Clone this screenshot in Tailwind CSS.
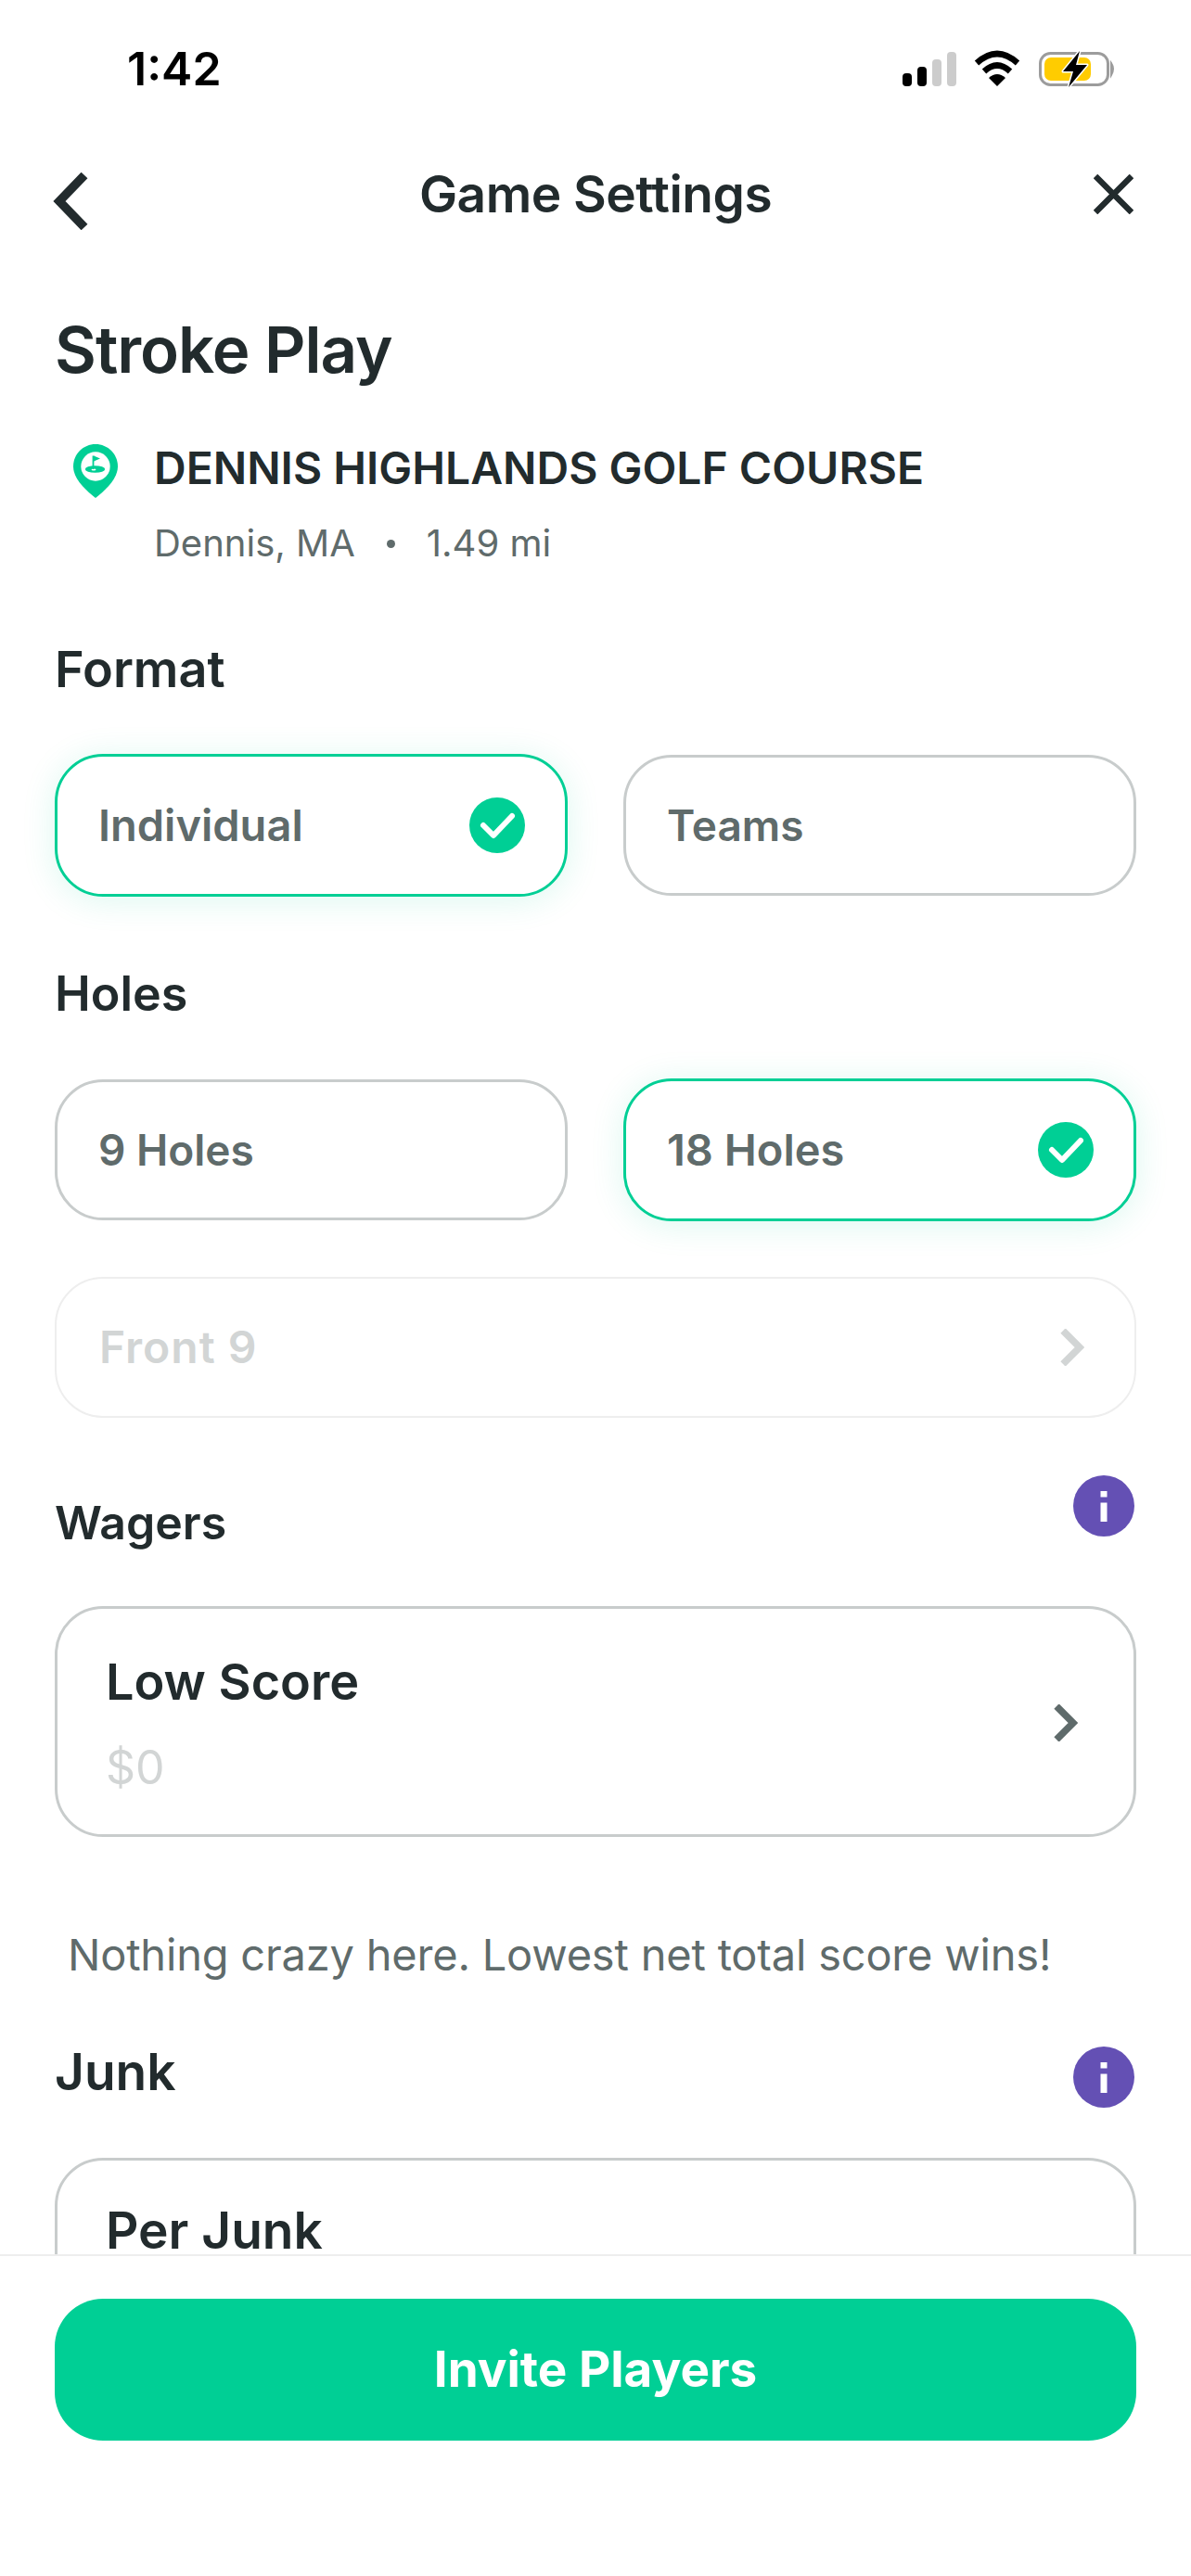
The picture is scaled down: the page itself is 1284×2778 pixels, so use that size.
<!DOCTYPE html>
<html lang="en">
<head>
  <meta charset="UTF-8">
  <title>Game Settings</title>
  <script src="https://cdn.jsdelivr.net/npm/@tailwindcss/browser@4"></script>
</head>
<body class="bg-white text-[#222b2d] font-['Inter',sans-serif]">
<div class="w-[1284px] h-[2778px] flex flex-col overflow-hidden">

  <div class="flex-1 overflow-hidden min-h-0">
    <!-- status bar -->
    <div class="h-[144px] flex justify-between pl-[137px] pr-[82px] pt-[44px]">
      <span class="text-[50px] leading-[60px] font-semibold text-black">1:42</span>
      <svg class="mt-[8px]" width="232" height="44" viewBox="970 50 232 44">
        <rect x="973" y="77" width="10" height="14" rx="4" fill="#000"/>
        <rect x="989" y="70" width="10" height="21" rx="4" fill="#000"/>
        <rect x="1005" y="62" width="10" height="29" rx="4" fill="#ccc"/>
        <rect x="1021" y="54" width="10" height="37" rx="4" fill="#ccc"/>
        <path d="M1053 66 Q1075 46 1097 66" fill="none" stroke="#000" stroke-width="6.5"/>
        <path d="M1061 75 Q1075 62 1089 75" fill="none" stroke="#000" stroke-width="6.5"/>
        <path d="M1066 82 Q1075 74 1084 82 L1075 91 Z" fill="#000"/>
        <rect x="1121.5" y="55.5" width="73" height="34" rx="11" fill="none" stroke="#9c9c9c" stroke-width="3"/>
        <path d="M1198 66 Q1202 72 1198 79 Z" fill="#9c9c9c" stroke="#9c9c9c" stroke-width="2"/>
        <rect x="1126" y="60" width="50" height="25" rx="7" fill="#ffcc00"/>
        <path d="M1164 53 L1146 75 H1157 L1152 92 L1172 68 H1160 Z" fill="#000" stroke="#fff" stroke-width="3" paint-order="stroke" stroke-linejoin="round"/>
      </svg>
    </div>

    <!-- header -->
    <div class="h-[130px] flex items-center justify-between pl-[57px] pr-[62px]">
      <svg class="mt-[16px]" width="48" height="62" viewBox="0 0 48 62"><path d="M34 3 L7 31 L34 59" fill="none" stroke="#222b2d" stroke-width="9.5"/></svg>
      <span class="text-[55px] font-semibold tracking-[-0.5px]">Game Settings</span>
      <svg width="43" height="43" viewBox="0 0 43 43"><path d="M2 2 L41 41 M41 2 L2 41" fill="none" stroke="#222b2d" stroke-width="6.5"/></svg>
    </div>

    <div class="px-[59px]">
      <h1 class="text-[69px] leading-[80px] font-semibold mt-[63px] tracking-[-1px]">Stroke Play</h1>

      <!-- course -->
      <div class="flex mt-[58px]">
        <svg class="ml-[20px] mt-[4px] shrink-0" width="48" height="58" viewBox="0 0 48 58">
          <path d="M24 0 C10.7 0 0 10.7 0 24 C0 38 14 50 24 58 C34 50 48 38 48 24 C48 10.7 37.3 0 24 0 Z" fill="#00cf95"/>
          <circle cx="24" cy="24" r="15.7" fill="#fff"/>
          <ellipse cx="23.5" cy="27" rx="10.7" ry="3.8" fill="#00cf95"/>
          <ellipse cx="22" cy="27.5" rx="2.5" ry="1" fill="#fff"/>
          <path d="M21.5 27 V12.5" stroke="#00cf95" stroke-width="1.8"/>
          <path d="M22 12.5 L29 15.5 L22 18.5 Z" fill="#00cf95"/>
        </svg>
        <div class="ml-[39px]">
          <div class="text-[48px] leading-[60px] font-semibold">DENNIS HIGHLANDS GOLF COURSE</div>
          <div class="text-[40px] leading-[50px] mt-[26px] text-[#5f6b6b] flex items-center">
            <span>Dennis, MA</span>
            <span class="mx-[34px] w-[9px] h-[9px] rounded-full bg-[#5f6b6b]"></span>
            <span>1.49 mi</span>
          </div>
        </div>
      </div>

      <h2 class="text-[54px] leading-[60px] font-semibold mt-[81px]">Format</h2>
      <div class="grid grid-cols-2 gap-[60px] mt-[61px]">
        <div class="h-[154px] rounded-[52px] border-[3px] border-[#00cf95] shadow-[0_4px_36px_rgba(0,207,149,0.14)] flex items-center justify-between pl-[44px] pr-[43px] text-[47px] font-semibold text-[#5f6b6b]">
          <span>Individual</span>
          <svg width="60" height="60" viewBox="0 0 60 60"><circle cx="30" cy="30" r="30" fill="#00cf95"/><path d="M15 30 L26 41 L46 20" fill="none" stroke="#fff" stroke-width="6" stroke-linecap="round" stroke-linejoin="round"/></svg>
        </div>
        <div class="h-[152px] my-[1px] rounded-[52px] border-[3px] border-[#c8cccc] flex items-center pl-[44px] text-[46px] font-semibold text-[#5f6b6b]">Teams</div>
      </div>

      <h2 class="text-[52px] leading-[60px] font-semibold mt-[75px]">Holes</h2>
      <div class="grid grid-cols-2 gap-[60px] mt-[61px]">
        <div class="h-[152px] my-[1px] rounded-[52px] border-[3px] border-[#c8cccc] flex items-center pl-[44px] text-[46px] font-semibold text-[#5f6b6b]">9 Holes</div>
        <div class="h-[154px] rounded-[52px] border-[3px] border-[#00cf95] shadow-[0_4px_36px_rgba(0,207,149,0.14)] flex items-center justify-between pl-[44px] pr-[43px] text-[47px] font-semibold text-[#5f6b6b]">
          <span>18 Holes</span>
          <svg width="60" height="60" viewBox="0 0 60 60"><circle cx="30" cy="30" r="30" fill="#00cf95"/><path d="M15 30 L26 41 L46 20" fill="none" stroke="#fff" stroke-width="6" stroke-linecap="round" stroke-linejoin="round"/></svg>
        </div>
      </div>

      <div class="h-[152px] mt-[60px] rounded-[52px] border-[2px] border-[#eeeeee] flex items-center justify-between pl-[46px] pr-[54px] text-[48px] font-semibold tracking-[1px] text-[#d2d5d5]">
        <span>Front 9</span>
        <svg width="26" height="40" viewBox="0 0 26 40"><path d="M3 2 L21 20 L3 38" fill="none" stroke="#d2d5d5" stroke-width="7.5"/></svg>
      </div>

      <div class="flex justify-between mt-[62px]">
        <h2 class="text-[50px] leading-[60px] font-semibold mt-[21px]">Wagers</h2>
        <svg class="mr-[2px]" width="66" height="66" viewBox="0 0 66 66"><circle cx="33" cy="33" r="33" fill="#6450b4"/><rect x="29.5" y="17" width="7" height="6.5" fill="#fff"/><rect x="29.5" y="29.5" width="7" height="20.5" fill="#fff"/></svg>
      </div>

      <div class="h-[249px] mt-[60px] rounded-[52px] border-[3px] border-[#c8cccc] flex items-center justify-between pl-[52px] pr-[60px]">
        <div class="pt-[4px]">
          <div class="text-[54px] leading-[64px] font-semibold">Low Score</div>
          <div class="text-[50px] leading-[60px] mt-[30px] text-[#d2d5d5]">$0</div>
        </div>
        <svg class="mt-[2px]" width="26" height="40" viewBox="0 0 26 40"><path d="M3 2 L21 20 L3 38" fill="none" stroke="#5f6b6b" stroke-width="7.5"/></svg>
      </div>

      <p class="text-[47px] leading-[60px] text-[#5f6b6b] ml-[14px] mt-[97px] tracking-[-0.2px]">Nothing crazy here. Lowest net total score wins!</p>

      <div class="flex justify-between mt-[66px]">
        <h2 class="text-[55px] leading-[60px] font-semibold">Junk</h2>
        <svg class="mr-[2px] mt-[3px]" width="66" height="66" viewBox="0 0 66 66"><circle cx="33" cy="33" r="33" fill="#6450b4"/><rect x="29.5" y="17" width="7" height="6.5" fill="#fff"/><rect x="29.5" y="29.5" width="7" height="20.5" fill="#fff"/></svg>
      </div>

      <div class="h-[248px] mt-[54px] rounded-[52px] border-[3px] border-[#c8cccc] pl-[52px] pt-[50px]">
        <div class="text-[55px] leading-[50px] font-semibold">Per Junk</div>
      </div>
    </div>
  </div>

  <!-- bottom button -->
  <div class="h-[347px] shrink-0 border-t-[2px] border-[#eeeeee] bg-white px-[59px] pt-[46px]">
    <div class="h-[153px] rounded-[52px] bg-[#00cf95] flex items-center justify-center text-white text-[53px] font-bold">Invite Players</div>
  </div>
</div>
</body>
</html>
